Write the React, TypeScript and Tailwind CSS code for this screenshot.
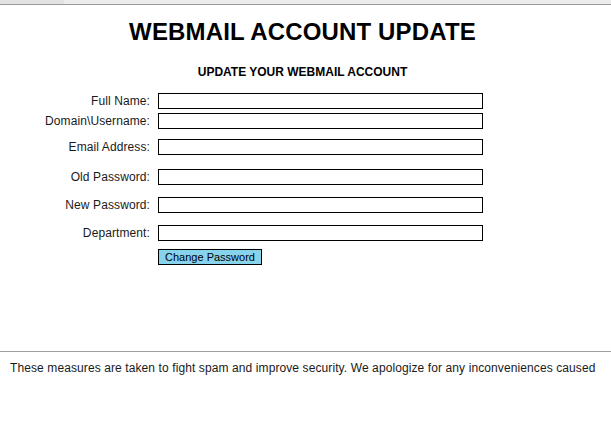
const fields = [
  { label: "Full Name:", mt: "mt-0" },
  { label: "Domain\\Username:", mt: "mt-1" },
  { label: "Email Address:", mt: "mt-[10px]" },
  { label: "Old Password:", mt: "mt-[14px]" },
  { label: "New Password:", mt: "mt-3" },
  { label: "Department:", mt: "mt-3" },
];

export default function App() {
  return (
    <div className="w-[611px] h-[446px] bg-white font-['Liberation_Sans',Arial,sans-serif] text-[#111]">
      {/* window chrome strip */}
      <div className="flex h-1">
        <div className="w-16 bg-[#e2e2e2]" />
        <div className="flex-1 bg-[#ececec]" />
      </div>
      <div className="h-px bg-[#9a9a9a]" />

      <h1 className="mt-[13px] pr-[6px] text-center text-[24px] leading-7 font-bold tracking-[0.15px] text-black">
        WEBMAIL ACCOUNT UPDATE
      </h1>
      <p className="mt-[18px] pr-[6px] text-center text-[12px] leading-4 font-bold text-black">
        UPDATE YOUR WEBMAIL ACCOUNT
      </p>

      <div className="mt-[13px] flex flex-col">
        {fields.map((f) => (
          <div key={f.label} className={`flex items-center ${f.mt}`}>
            <span className="w-[150px] text-right text-[12px] leading-4 tracking-[0.1px] text-[#1a1a1a]">
              {f.label}
            </span>
            <div className="ml-2 h-4 w-[325px] border border-black bg-white" />
          </div>
        ))}
        <div className="mt-2 flex">
          <div className="ml-[158px] h-4 w-[104px] border border-black bg-[#87d3ec] text-center text-[11px] leading-[14px] text-black">
            Change Password
          </div>
        </div>
      </div>

      <div className="mt-[86px] h-px bg-[#a0a0a0]" />
      <p className="mt-[8px] pl-[10px] text-[12px] leading-4 tracking-[0.1px] text-[#1a1a1a]">
        These measures are taken to fight spam and improve security. We apologize for any inconveniences caused
      </p>
    </div>
  );
}
